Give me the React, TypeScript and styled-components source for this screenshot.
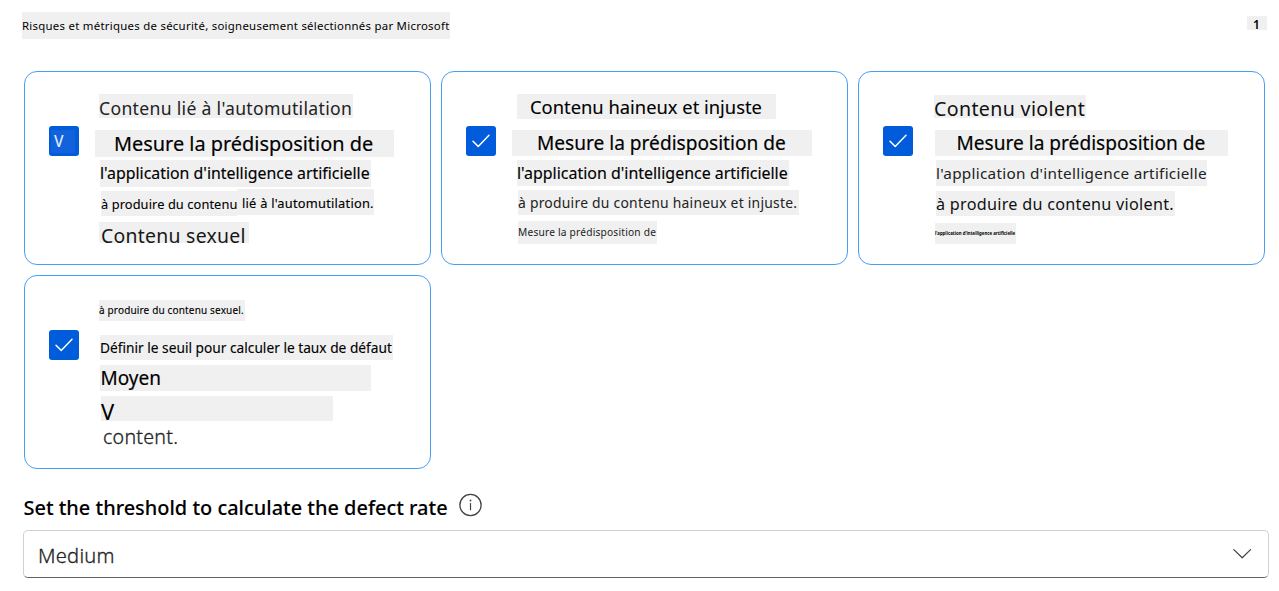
import React from "react";
import styled, { createGlobalStyle } from "styled-components";

const GlobalStyle = createGlobalStyle`
  * { box-sizing: border-box; }
  body { margin: 0; background: #fff; font-family: "Noto Sans", "Open Sans", sans-serif; color: #000; }
`;

const Page = styled.main`
  width: 1279px;
  height: 591px;
  padding: 12px 10px 0 22px;
  overflow: hidden;
`;

const Header = styled.header`
  display: flex;
  justify-content: space-between;
  align-items: flex-start;
  height: 59px;
  padding-right: 2px;
`;

interface LineProps {
  $indent?: number;
  $gap?: number;
  $width: number;
  $height: number;
  $size: number;
  $base: number;
  $pad?: number;
  $weight?: number;
  $stroke?: number;
  $color?: string;
  $spacing?: number;
  $plain?: boolean;
}

/* $base is the distance from the top of the strip to the text baseline. */
const Line = styled.div<LineProps>`
  flex: none;
  margin: ${(p) => p.$gap ?? 0}px 0 0 ${(p) => p.$indent ?? 0}px;
  width: ${(p) => p.$width}px;
  height: ${(p) => p.$height}px;
  padding-left: ${(p) => p.$pad ?? 0}px;
  background: ${(p) => (p.$plain ? "transparent" : "#f0f0f0")};
  color: ${(p) => p.$color ?? "#000"};
  font-size: ${(p) => p.$size}px;
  font-weight: ${(p) => p.$weight ?? 400};
  line-height: ${(p) => 2 * (p.$base - 0.388 * p.$size)}px;
  letter-spacing: ${(p) => p.$spacing ?? 0}px;
  -webkit-text-stroke: ${(p) => p.$stroke ?? 0}px currentColor;
  white-space: nowrap;
`;

const SplitRow = styled.div<{ $gap: number; $indent: number }>`
  display: flex;
  align-items: flex-start;
  margin: ${(p) => p.$gap}px 0 0 ${(p) => p.$indent}px;
`;

const Cards = styled.section`
  display: grid;
  grid-template-columns: repeat(3, 407px);
  grid-auto-rows: 194px;
  gap: 10px;
  padding-left: 2px;
`;

const Card = styled.article`
  display: flex;
  gap: 16px;
  padding: 0 0 0 24px;
  border: 1px solid #479ef5;
  border-radius: 13px;
`;

const CheckBox = styled.div`
  display: flex;
  flex: none;
  width: 30px;
  height: 30px;
  margin-top: 54px;
  border-radius: 3px;
  background: #005cdb;
  color: #fff;
`;

const LetterPatch = styled.span`
  width: 24px;
  height: 23px;
  margin: 4px 0 0 2px;
  padding-left: 3px;
  background: #1262dc;
  color: #dbe8fb;
  font-size: 15.5px;
  font-weight: 500;
  line-height: 22px;
`;

const Body = styled.div`
  display: flex;
  flex-direction: column;
`;

const FieldLabel = styled.div`
  display: flex;
  align-items: flex-start;
  height: 61px;
  padding: 24px 0 0 1px;
`;

const Select = styled.div`
  display: flex;
  justify-content: space-between;
  align-items: flex-start;
  width: 1246px;
  height: 48px;
  margin-left: 1px;
  padding: 0 16px 0 14px;
  border: 1px solid #d1d1d1;
  border-bottom-color: #616161;
  border-radius: 5px;
`;

const InfoIcon = styled.svg`
  margin: 0 0 0 10px;
`;

const Chevron = styled.svg`
  margin-top: 16px;
`;

const Check = () => (
  <CheckBox>
    <svg width="30" height="30" viewBox="0 0 30 30" fill="none">
      <path d="M7 15.2l5.2 5.2L23 9.3" stroke="#fff" strokeWidth="1.5" strokeLinecap="round" strokeLinejoin="round" />
    </svg>
  </CheckBox>
);

export default function App() {
  return (
    <>
      <GlobalStyle />
      <Page>
        <Header>
          <Line $width={428} $height={27} $size={11.4} $base={18} $spacing={0.27}>
            Risques et métriques de sécurité, soigneusement sélectionnés par Microsoft
          </Line>
          <Line $gap={4} $width={20} $height={14} $size={12} $base={14} $pad={6} $weight={600}>1</Line>
        </Header>

        <Cards>
          <Card>
            <CheckBox><LetterPatch>V</LetterPatch></CheckBox>
            <Body>
              <Line $gap={22} $indent={4} $width={254} $height={24} $size={17.6} $base={21} $spacing={0.31} $color="#222">Contenu lié à l'automutilation</Line>
              <Line $gap={12} $width={299} $height={27} $size={19.9} $base={22} $pad={19} $stroke={0.18}>Mesure la prédisposition de</Line>
              <Line $gap={3} $indent={5} $width={271} $height={27} $size={15.88} $base={20} $stroke={0.15}>l'application d'intelligence artificielle</Line>
              <SplitRow $gap={2} $indent={6}>
                <Line $gap={2} $width={136} $height={25} $size={12.8} $base={18} $spacing={0.1} $stroke={0.1}>à produire du contenu</Line>
                <Line $width={137} $height={26} $size={12.8} $base={19} $pad={5} $spacing={0.25} $stroke={0.15}>lié à l'automutilation.</Line>
              </SplitRow>
              <Line $gap={6} $indent={4} $width={150} $height={21} $size={19.4} $base={22} $pad={2} $spacing={0.27} $color="#181818">Contenu sexuel</Line>
            </Body>
          </Card>

          <Card>
            <Check />
            <Body>
              <Line $gap={22} $indent={5} $width={259} $height={25} $size={18.35} $base={20} $pad={13} $stroke={0.1}>Contenu haineux et injuste</Line>
              <Line $gap={11} $width={300} $height={26} $size={19.1} $base={21} $pad={25} $stroke={0.18}>Mesure la prédisposition de</Line>
              <Line $gap={4} $indent={5} $width={272} $height={26} $size={15.95} $base={20} $stroke={0.15}>l'application d'intelligence artificielle</Line>
              <Line $gap={4} $indent={6} $width={281} $height={25} $size={13.9} $base={18.5} $spacing={0.24} $color="#222">à produire du contenu haineux et injuste.</Line>
              <Line $gap={6} $indent={6} $width={139} $height={23} $size={10.2} $base={15.5} $spacing={0.2} $color="#222">Mesure la prédisposition de</Line>
            </Body>
          </Card>

          <Card>
            <Check />
            <Body>
              <Line $gap={23} $indent={5} $width={152} $height={23} $size={19.6} $base={21.6} $spacing={0.35} $color="#111">Contenu violent</Line>
              <Line $gap={12} $indent={6} $width={293} $height={26} $size={19.1} $base={21} $pad={21.5} $stroke={0.18}>Mesure la prédisposition de</Line>
              <Line $gap={4} $indent={7} $width={271} $height={26} $size={15.3} $base={19.4} $spacing={0.27} $color="#222">l'application d'intelligence artificielle</Line>
              <Line $gap={5} $indent={7} $width={239} $height={25} $size={16.2} $base={19.6} $spacing={0.27} $color="#111">à produire du contenu violent.</Line>
              <Line $gap={7} $indent={6} $width={81} $height={21} $size={4.35} $base={12} $weight={700}>l'application d'intelligence artificielle</Line>
            </Body>
          </Card>

          <Card>
            <Check />
            <Body>
              <Line $gap={24} $indent={4} $width={146} $height={21} $size={10} $base={14} $spacing={0.16} $stroke={0.12}>à produire du contenu sexuel.</Line>
              <Line $gap={14} $indent={5} $width={293} $height={25} $size={13.73} $base={18} $stroke={0.12}>Définir le seuil pour calculer le taux de défaut</Line>
              <Line $gap={5} $indent={5} $width={271} $height={26} $size={19} $base={20.6} $pad={0.5} $stroke={0.18}>Moyen</Line>
              <Line $gap={5} $indent={6} $width={232} $height={25} $size={22} $base={24} $stroke={0.12}>V</Line>
              <Line $gap={0} $indent={8} $width={120} $height={28} $size={19.6} $base={23.8} $weight={300} $stroke={0.3} $spacing={0.25} $color="#242424" $plain>content.</Line>
            </Body>
          </Card>
        </Cards>

        <FieldLabel>
          <Line $width={426} $height={30} $size={19.95} $base={23} $weight={500} $stroke={0.1} $pad={0.5} $plain>
            Set the threshold to calculate the defect rate
          </Line>
          <InfoIcon width="24" height="24" viewBox="0 0 24 24" fill="none">
            <circle cx="11.5" cy="12" r="10.6" stroke="#424242" strokeWidth="1.3" />
            <path d="M11.5 10.5v6.2" stroke="#424242" strokeWidth="1.2" strokeLinecap="round" />
            <circle cx="11.5" cy="7.5" r="0.9" fill="#424242" />
          </InfoIcon>
        </FieldLabel>

        <Select>
          <Line $width={120} $height={40} $size={20.1} $base={33} $weight={300} $stroke={0.3} $spacing={0.25} $color="#242424" $plain>Medium</Line>
          <Chevron width="20" height="14" viewBox="0 0 20 14" fill="none">
            <path d="M1.8 2.6l8.4 8.2 8.4-8.2" stroke="#424242" strokeWidth="1.2" strokeLinecap="round" strokeLinejoin="round" />
          </Chevron>
        </Select>
      </Page>
    </>
  );
}
